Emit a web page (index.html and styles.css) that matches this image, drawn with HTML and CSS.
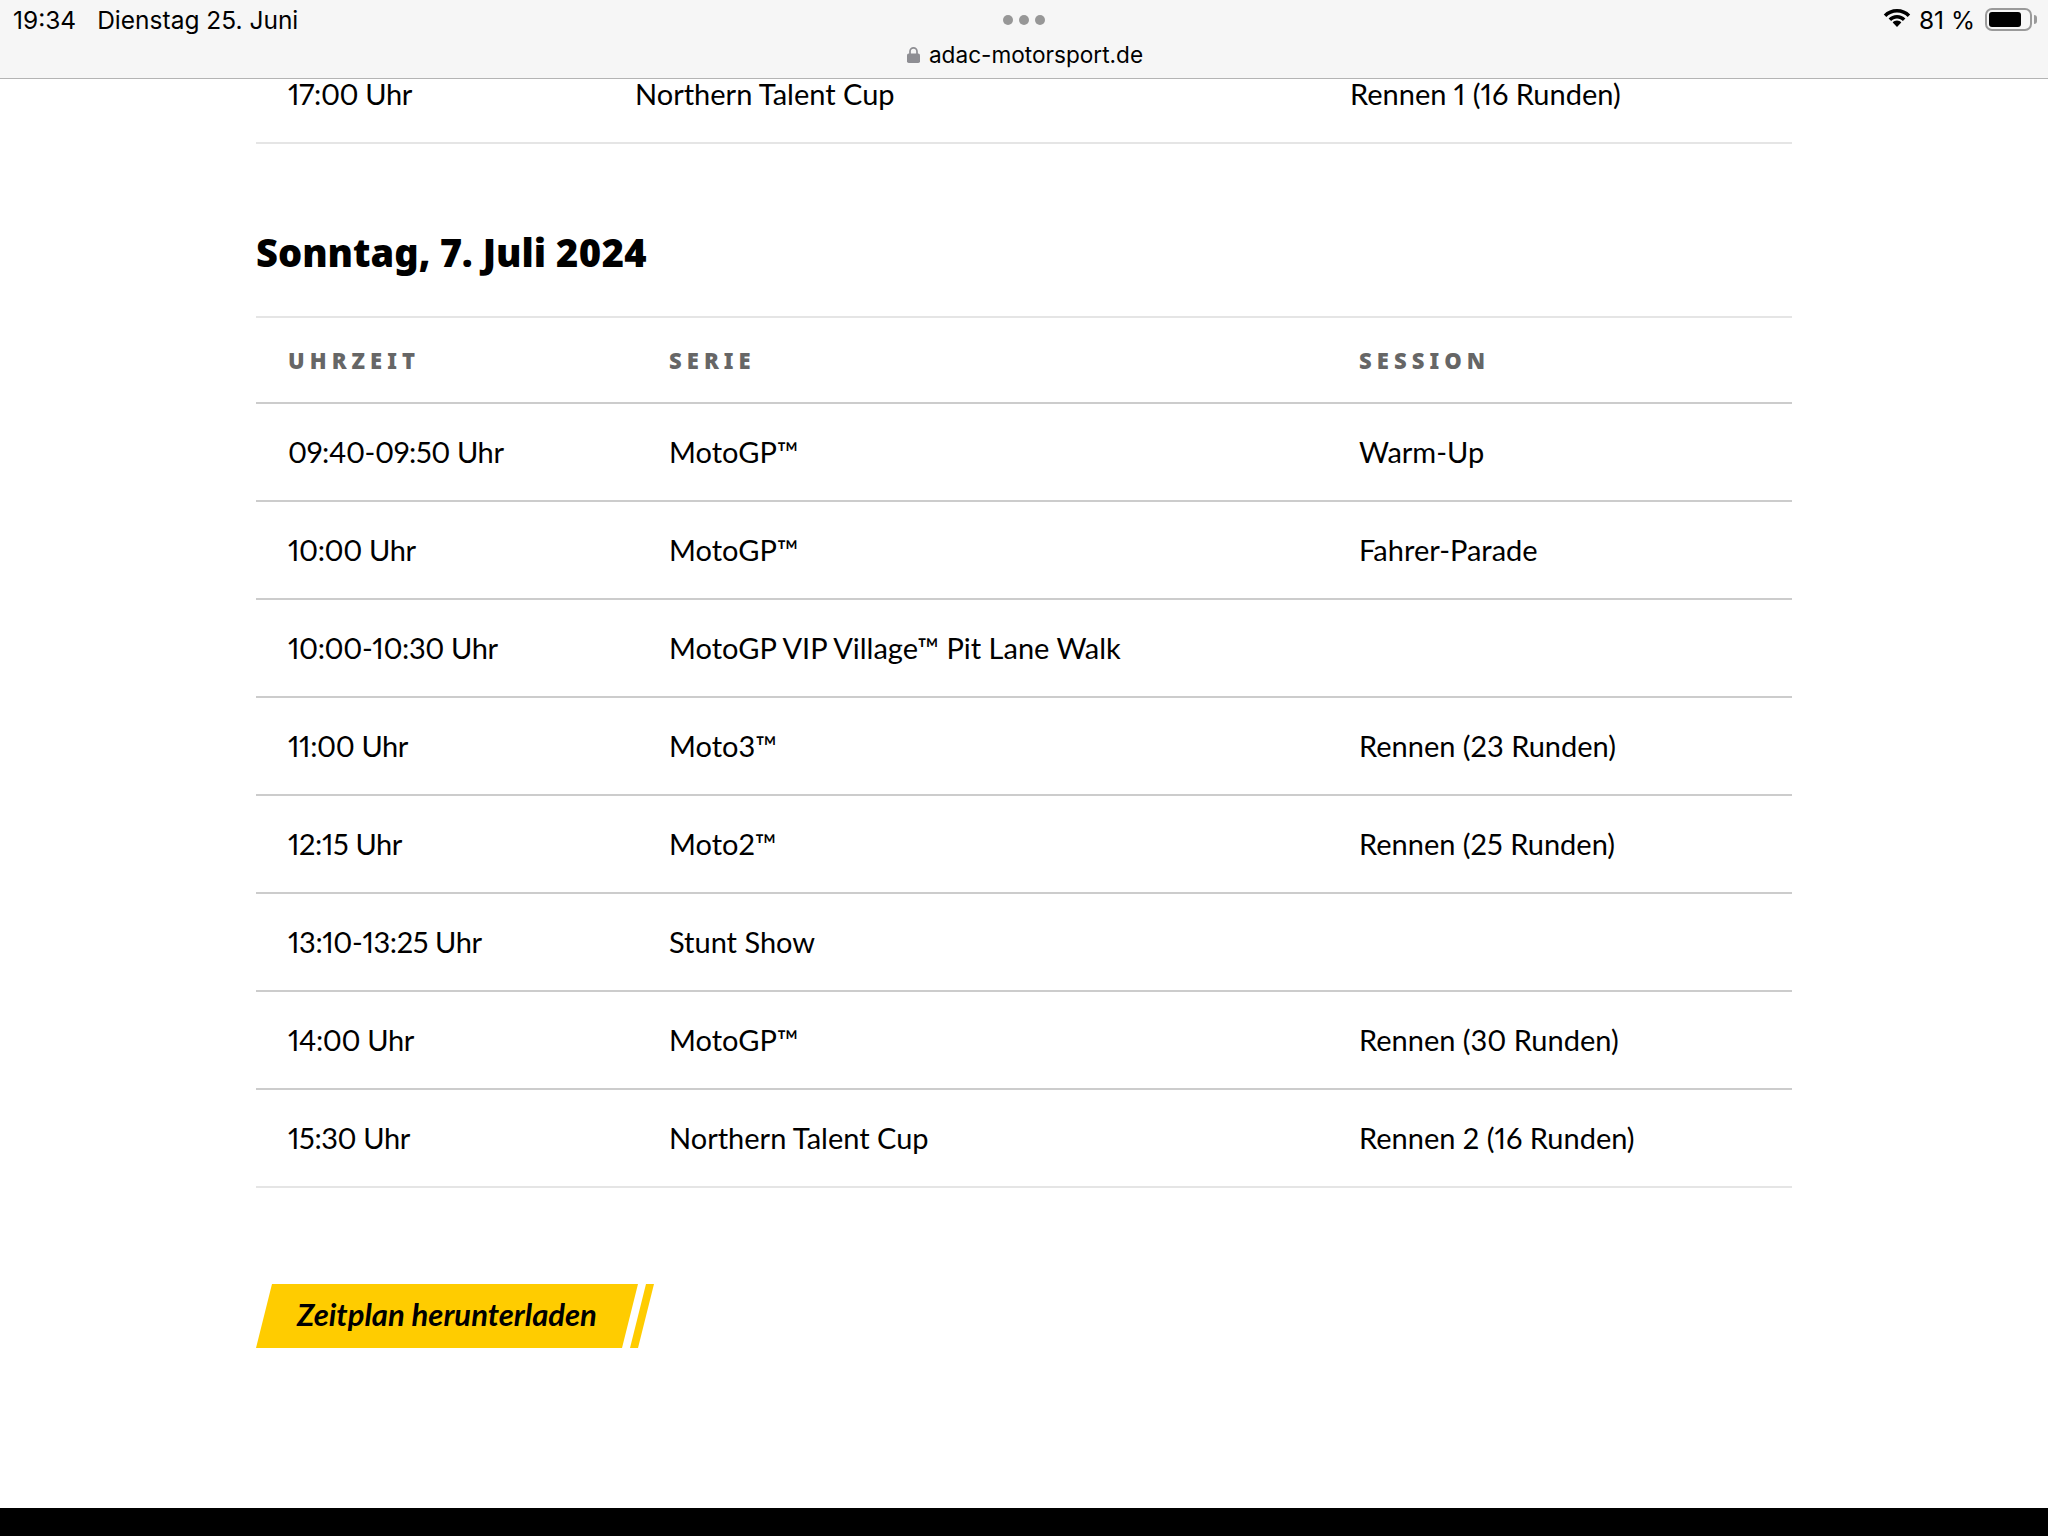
FILE: index.html
```html
<!DOCTYPE html>
<html lang="de">
<head>
<meta charset="utf-8">
<title>Zeitplan</title>
<link rel="stylesheet" href="styles.css">
</head>
<body>
<div class="page">
  <header class="bar">
    <div class="bar-left"><span class="time">19:34</span><span>Dienstag 25. Juni</span></div>
    <div class="bar-center">
      <div class="dots"><i></i><i></i><i></i></div>
      <div class="url">
        <svg class="lock" viewBox="0 0 13 16" width="13" height="16"><path d="M3 7V4.400a3.500 3.500 0 0 1 7 0V7" fill="none" stroke="#8e8e93" stroke-width="1.700"/><rect x="0" y="6.500" width="13" height="9.500" rx="1.800" fill="#8e8e93"/></svg>
        <span>adac-motorsport.de</span>
      </div>
    </div>
    <div class="bar-right">
      <svg class="wifi" viewBox="0 0 28 20" width="28" height="20"><path d="M14 2C8.800 2 4.200 4 .8 7.400L3.300 10C6.100 7.200 9.900 5.500 14 5.500s7.900 1.700 10.700 4.500l2.500-2.600C23.800 4 19.200 2 14 2z" fill="#000"/><path d="M14 8C10.700 8 7.800 9.300 5.600 11.500l2.500 2.600c1.500-1.500 3.600-2.500 5.900-2.500s4.400 1 5.900 2.500l2.500-2.600C20.200 9.300 17.300 8 14 8z" fill="#000"/><path d="M14 13.600c-1.700 0-3.200.7-4.300 1.800L14 20l4.300-4.600c-1.100-1.100-2.600-1.800-4.300-1.800z" fill="#000"/></svg>
      <span class="pct">81 %</span>
      <div class="battery"><div class="battery-level"></div></div>
      <div class="battery-nub"></div>
    </div>
  </header>

  <main class="content">
    <table class="table table-prev">
      <tbody>
        <tr class="row-clipped"><td>17:00 Uhr</td><td>Northern Talent Cup</td><td>Rennen 1 (16 Runden)</td></tr>
      </tbody>
    </table>

    <h2 class="day">Sonntag, 7. Juli 2024</h2>

    <table class="table table-day">
      <thead>
        <tr><th>Uhrzeit</th><th>Serie</th><th>Session</th></tr>
      </thead>
      <tbody>
        <tr><td>09:40-09:50 Uhr</td><td>MotoGP™</td><td>Warm-Up</td></tr>
        <tr><td>10:00 Uhr</td><td>MotoGP™</td><td>Fahrer-Parade</td></tr>
        <tr><td>10:00-10:30 Uhr</td><td>MotoGP VIP Village™ Pit Lane Walk</td><td></td></tr>
        <tr><td>11:00 Uhr</td><td>Moto3™</td><td>Rennen (23 Runden)</td></tr>
        <tr><td>12:15 Uhr</td><td>Moto2™</td><td>Rennen (25 Runden)</td></tr>
        <tr><td>13:10-13:25 Uhr</td><td>Stunt Show</td><td></td></tr>
        <tr><td>14:00 Uhr</td><td>MotoGP™</td><td>Rennen (30 Runden)</td></tr>
        <tr><td>15:30 Uhr</td><td>Northern Talent Cup</td><td>Rennen 2 (16 Runden)</td></tr>
      </tbody>
    </table>

    <a class="button" href="#"><span class="button-main">Zeitplan herunterladen</span><span class="button-stripe"></span></a>
  </main>

  <footer class="footer"></footer>
</div>
</body>
</html>
```
FILE: styles.css
```css
* { box-sizing: border-box; }
html, body { margin: 0; padding: 0; background: #fff; }
.page {
  width: 2048px;
  height: 1536px;
  display: flex;
  flex-direction: column;
  overflow: hidden;
  font-family: Lato, "Liberation Sans", sans-serif;
  font-variant-numeric: proportional-nums;
  color: #000;
}
.bar {
  height: 79px;
  flex: none;
  background: #f6f6f6;
  border-bottom: 1px solid #b4b4b4;
  display: grid;
  grid-template-columns: 1fr auto 1fr;
  font-family: Inter, "Liberation Sans", sans-serif;
  font-size: 24.5px;
}
.bar-left {
  padding: 6px 0 0 13px;
  display: flex;
  gap: 21px;
  height: 40px;
  line-height: 28px;
}
.bar-center {
  display: flex;
  flex-direction: column;
  align-items: center;
  padding-top: 15px;
}
.dots { display: flex; gap: 6px; }
.dots i { width: 10px; height: 10px; border-radius: 50%; background: #979797; display: block; }
.url {
  display: flex;
  align-items: center;
  gap: 9px;
  margin-top: 15px;
  padding-left: 2px;
  line-height: 30px;
  font-size: 22.6px;
}
.bar-right {
  display: flex;
  justify-content: flex-end;
  align-items: flex-start;
  padding: 6px 11px 0 0;
  line-height: 28px;
}
.wifi { margin: 1px 8px 0 0; }
.pct { margin-right: 10px; }
.battery {
  width: 47px;
  height: 23px;
  margin-top: 2px;
  border: 2px solid #9a9a9a;
  border-radius: 7px;
  padding: 2px;
}
.battery-level { width: 32px; height: 15px; background: #000; border-radius: 3px; }
.battery-nub {
  width: 3px;
  height: 9px;
  margin: 9px 0 0 2px;
  background: #9a9a9a;
  border-radius: 0 3px 3px 0;
}
.content { flex: 1; padding: 0 256px; }
.table {
  width: 1536px;
  border-collapse: collapse;
  table-layout: fixed;
  font-size: 29px;
  line-height: 30px;
}
.table td, .table th { padding: 0 0 0 32px; text-align: left; }
.table td { border-bottom: 2px solid #ccc; height: 98px; }
.table td:first-child { letter-spacing: -0.4px; }
.table-prev td { border-bottom-color: #e5e5e5; height: 63px; padding-bottom: 33px; vertical-align: bottom; }
.table-prev td:nth-child(1) { width: 347px; }
.table-prev td:nth-child(2) { width: 715px; }
.day {
  margin: 0;
  padding: 85px 0 0;
  height: 172px;
  font-family: "Noto Sans", "DejaVu Sans", sans-serif;
  font-size: 38px;
  line-height: 46px;
  font-weight: 900;
}
.table-day th {
  height: 86px;
  border-top: 2px solid #e5e5e5;
  border-bottom: 2px solid #ccc;
  color: #666;
  font-family: "Noto Sans", "DejaVu Sans", sans-serif;
  font-size: 22px;
  font-weight: 900;
  letter-spacing: 0.23em;
  text-transform: uppercase;
}
.table-day th:nth-child(1) { width: 381px; }
.table-day th:nth-child(2) { width: 690px; }
.table-day tbody tr:last-child td { border-bottom-color: #e5e5e5; }
.button {
  display: flex;
  width: 399px;
  height: 64px;
  margin-top: 96px;
  gap: 8px;
  text-decoration: none;
  color: #000;
}
.button-main {
  width: 382px;
  display: flex;
  align-items: center;
  padding: 0 0 4px 41px;
  background: #fc0;
  clip-path: polygon(16px 0, 100% 0, 366px 100%, 0 100%);
  font-size: 31px;
  font-weight: 700;
  font-style: italic;
}
.button-stripe {
  width: 24px;
  margin-left: -16px;
  background: #fc0;
  clip-path: polygon(16px 0, 100% 0, 8px 100%, 0 100%);
}
.footer { height: 28px; flex: none; background: #000; }
```
